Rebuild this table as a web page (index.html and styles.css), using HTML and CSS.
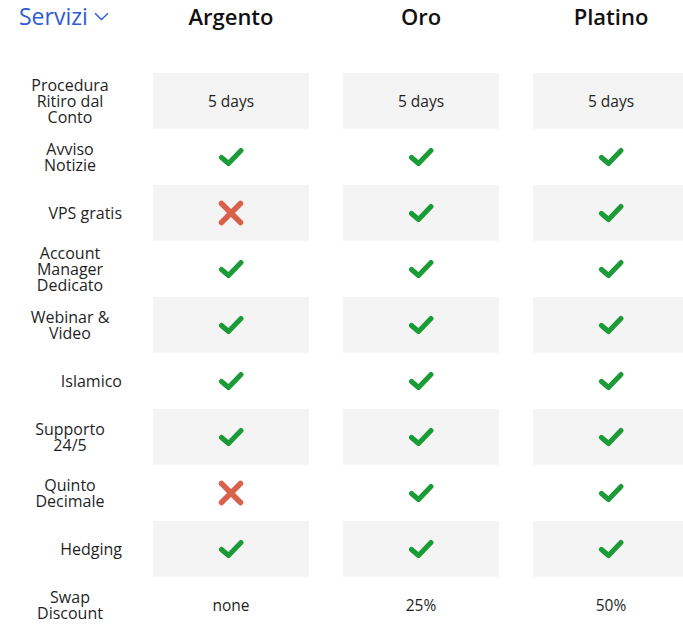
FILE: index.html
```html
<!DOCTYPE html>
<html lang="it">
<head>
<meta charset="utf-8">
<link rel="stylesheet" href="styles.css">
</head>
<body>
<svg width="0" height="0" class="defs">
  <defs>
    <symbol id="ok" viewBox="0 0 26 20">
      <path d="M3.5 10.5 L10.5 16.5 L23 3.5" fill="none" stroke="#1b9b35" stroke-width="5" stroke-linecap="round" stroke-linejoin="round"/>
    </symbol>
    <symbol id="no" viewBox="0 0 26 26">
      <path d="M3.5 3.5 L22.5 22.5 M22.5 3.5 L3.5 22.5" fill="none" stroke="#d9604a" stroke-width="5.5" stroke-linecap="round"/>
    </symbol>
  </defs>
</svg>
<div class="table">
  <div class="head">
    <div class="label-head">
      <span class="services">Servizi</span>
      <svg class="chev" width="15" height="9" viewBox="0 0 15 9"><path d="M1 1.2 L7.5 7.6 L14 1.2" fill="none" stroke="#2f5bd6" stroke-width="1.4"/></svg>
    </div>
    <div class="plan">Argento</div>
    <div class="plan">Oro</div>
    <div class="plan">Platino</div>
  </div>

  <div class="row shade">
    <div class="label"><span class="multi">Procedura<br>Ritiro dal<br>Conto</span></div>
    <div class="cell">5 days</div><div class="cell">5 days</div><div class="cell">5 days</div>
  </div>
  <div class="row">
    <div class="label"><span class="multi">Avviso<br>Notizie</span></div>
    <div class="cell"><svg class="ok"><use href="#ok"/></svg></div>
    <div class="cell"><svg class="ok"><use href="#ok"/></svg></div>
    <div class="cell"><svg class="ok"><use href="#ok"/></svg></div>
  </div>
  <div class="row shade">
    <div class="label"><span class="single">VPS gratis</span></div>
    <div class="cell"><svg class="no"><use href="#no"/></svg></div>
    <div class="cell"><svg class="ok"><use href="#ok"/></svg></div>
    <div class="cell"><svg class="ok"><use href="#ok"/></svg></div>
  </div>
  <div class="row">
    <div class="label"><span class="multi">Account<br>Manager<br>Dedicato</span></div>
    <div class="cell"><svg class="ok"><use href="#ok"/></svg></div>
    <div class="cell"><svg class="ok"><use href="#ok"/></svg></div>
    <div class="cell"><svg class="ok"><use href="#ok"/></svg></div>
  </div>
  <div class="row shade">
    <div class="label"><span class="multi">Webinar &amp;<br>Video</span></div>
    <div class="cell"><svg class="ok"><use href="#ok"/></svg></div>
    <div class="cell"><svg class="ok"><use href="#ok"/></svg></div>
    <div class="cell"><svg class="ok"><use href="#ok"/></svg></div>
  </div>
  <div class="row">
    <div class="label"><span class="single">Islamico</span></div>
    <div class="cell"><svg class="ok"><use href="#ok"/></svg></div>
    <div class="cell"><svg class="ok"><use href="#ok"/></svg></div>
    <div class="cell"><svg class="ok"><use href="#ok"/></svg></div>
  </div>
  <div class="row shade">
    <div class="label"><span class="multi">Supporto<br>24/5</span></div>
    <div class="cell"><svg class="ok"><use href="#ok"/></svg></div>
    <div class="cell"><svg class="ok"><use href="#ok"/></svg></div>
    <div class="cell"><svg class="ok"><use href="#ok"/></svg></div>
  </div>
  <div class="row">
    <div class="label"><span class="multi">Quinto<br>Decimale</span></div>
    <div class="cell"><svg class="no"><use href="#no"/></svg></div>
    <div class="cell"><svg class="ok"><use href="#ok"/></svg></div>
    <div class="cell"><svg class="ok"><use href="#ok"/></svg></div>
  </div>
  <div class="row shade">
    <div class="label"><span class="single">Hedging</span></div>
    <div class="cell"><svg class="ok"><use href="#ok"/></svg></div>
    <div class="cell"><svg class="ok"><use href="#ok"/></svg></div>
    <div class="cell"><svg class="ok"><use href="#ok"/></svg></div>
  </div>
  <div class="row">
    <div class="label"><span class="multi">Swap<br>Discount</span></div>
    <div class="cell">none</div><div class="cell">25%</div><div class="cell">50%</div>
  </div>
</div>
</body>
</html>
```

FILE: styles.css
```css
html, body {
  margin: 0;
  padding: 0;
  background: #fff;
  overflow: hidden;
}
body {
  width: 683px;
  height: 644px;
  font-family: "Open Sans", "Liberation Sans", sans-serif;
  color: #1f1f1f;
}
.defs {
  position: absolute;
  width: 0;
  height: 0;
}
.table {
  width: 700px;
}
.head {
  display: flex;
  height: 73px;
  gap: 34px;
}
.label-head {
  width: 119px;
  display: flex;
  align-items: flex-start;
  padding-left: 19px;
  box-sizing: border-box;
  gap: 6px;
}
.services {
  font-size: 23px;
  line-height: 32px;
  color: #2f5bd6;
  white-space: nowrap;
}
.chev {
  margin-top: 12px;
  flex: none;
}
.plan {
  width: 156px;
  text-align: center;
  font-size: 22px;
  font-weight: 600;
  line-height: 32px;
  color: #111;
}
.row {
  display: flex;
  height: 56px;
  gap: 34px;
}
.label {
  width: 119px;
  display: flex;
  align-items: center;
  padding-left: 18px;
  box-sizing: border-box;
  font-size: 16px;
  line-height: 16px;
}
.label span {
  display: block;
  width: 104px;
  flex: none;
}
.multi {
  text-align: center;
}
.single {
  text-align: right;
}
.cell {
  width: 156px;
  display: flex;
  align-items: center;
  justify-content: center;
  font-size: 15.5px;
}
.shade .cell {
  background: #f4f4f4;
}
.ok {
  width: 26px;
  height: 20px;
}
.no {
  width: 26px;
  height: 26px;
}
```
